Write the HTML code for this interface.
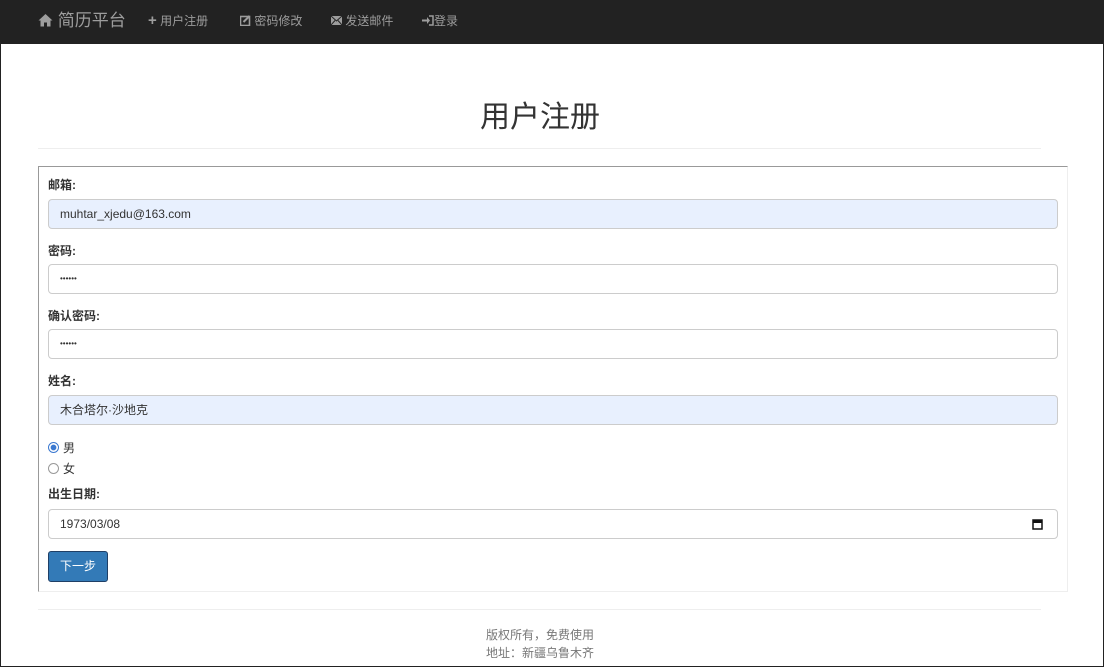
<!DOCTYPE html>
<html><head><meta charset="utf-8"><style>
*{box-sizing:border-box;margin:0;padding:0}
body{width:1104px;height:667px;overflow:hidden;font-family:"Liberation Sans","Noto Sans CJK SC",sans-serif;background:#fff;position:relative;color:#333}
.frame{position:absolute;left:0;top:0;width:1104px;height:667px;border:1px solid #222;pointer-events:none}
.nav{position:absolute;left:0;top:0;width:1104px;height:44px;background:#222;color:#9d9d9d}
.nav span{position:absolute;top:0;line-height:42px;font-size:12px;white-space:nowrap}
.brand{font-size:17px!important;color:#9d9d9d}
h1{position:absolute;left:0;width:1080px;text-align:center;top:92px;font-size:30px;font-weight:400;color:#333}
.hr{position:absolute;left:38px;width:1003px;height:1px;background:#eee}
.panel{position:absolute;left:38px;top:166px;width:1030px;height:426px;border:1px solid #eee;border-top:1px solid #999;border-left:1px solid #999}
label{position:absolute;left:48px;font-size:12px;font-weight:bold;color:#333}
.in{position:absolute;left:48px;width:1010px;height:30px;border:1px solid #ccc;border-radius:4px;font-size:12px;line-height:28px;padding-left:11px;color:#333}
.af{background:#e8f0fe}
.r{position:absolute;left:48px;font-size:12px}
.r i{display:inline-block;width:11px;height:11px;border-radius:50%;border:1px solid #999;vertical-align:-1px;margin-right:4px}
.btn{position:absolute;left:48px;top:551px;width:60px;height:31px;background:#337ab7;border:1px solid #1f3f66;border-radius:3px;color:#fff;font-size:12px;line-height:29px;text-align:center}
.ft{position:absolute;left:0;width:1080px;text-align:center;font-size:12px;color:#777}
</style></head><body>
<div class="nav">
<span class="brand" style="left:38px"><svg width="15" height="14" viewBox="0 0 15 14" style="vertical-align:-1px"><path d="M7.5 1L0.5 7.5H2.5V13.5H6V9.5H9V13.5H12.5V7.5H14.5Z" fill="#9d9d9d"/></svg> 简历平台</span>
<span style="left:148px"><b style="font-size:15px">+</b> 用户注册</span>
<span style="left:240px"><svg width="11" height="11" viewBox="0 0 11 11" style="vertical-align:-1px"><rect x="0.5" y="1.5" width="9" height="9" fill="none" stroke="#9d9d9d" stroke-width="1.6"/><path d="M3.5 7L9.5 1" stroke="#9d9d9d" stroke-width="2"/></svg> 密码修改</span>
<span style="left:331px"><svg width="11" height="9" viewBox="0 0 11 9" style="vertical-align:0"><rect width="11" height="9" fill="#9d9d9d"/><path d="M0 0L5.5 5L11 0M0 9L4 4.5M11 9L7 4.5" stroke="#222" fill="none"/></svg> 发送邮件</span>
<span style="left:422px"><svg width="12" height="11" viewBox="0 0 12 11" style="vertical-align:-1px"><path d="M0 4.5H5V2L8 5.5L5 9V6.5H0Z" fill="#9d9d9d"/><path d="M7 1H11V10H7" stroke="#9d9d9d" stroke-width="1.5" fill="none"/></svg>登录</span>
</div>
<h1>用户注册</h1>
<div class="hr" style="top:148px"></div>
<div class="panel"></div>
<label style="top:176px">邮箱:</label>
<div class="in af" style="top:199px">muhtar_xjedu@163.com</div>
<label style="top:242px">密码:</label>
<div class="in" style="top:264px;font-size:8px">••••••</div>
<label style="top:307px">确认密码:</label>
<div class="in" style="top:329px;font-size:8px">••••••</div>
<label style="top:372px">姓名:</label>
<div class="in af" style="top:395px">木合塔尔·沙地克</div>
<div class="r" style="top:439px"><i style="border-color:#3a78d0;background:radial-gradient(#3a78d0 40%,#fff 50%)"></i>男</div>
<div class="r" style="top:460px"><i></i>女</div>
<label style="top:485px">出生日期:</label>
<div class="in" style="top:509px">1973/03/08<svg width="11" height="12" viewBox="0 0 11 12" style="position:absolute;right:14px;top:8px"><rect x="1" y="2" width="9" height="9" fill="none" stroke="#111" stroke-width="1.5"/><rect x="1" y="2" width="9" height="3" fill="#111"/></svg></div>
<div class="btn">下一步</div>
<div class="hr" style="top:609px"></div>
<div class="ft" style="top:626px">版权所有，免费使用</div>
<div class="ft" style="top:644px">地址：新疆乌鲁木齐</div>
<div class="frame"></div>
</body></html>
